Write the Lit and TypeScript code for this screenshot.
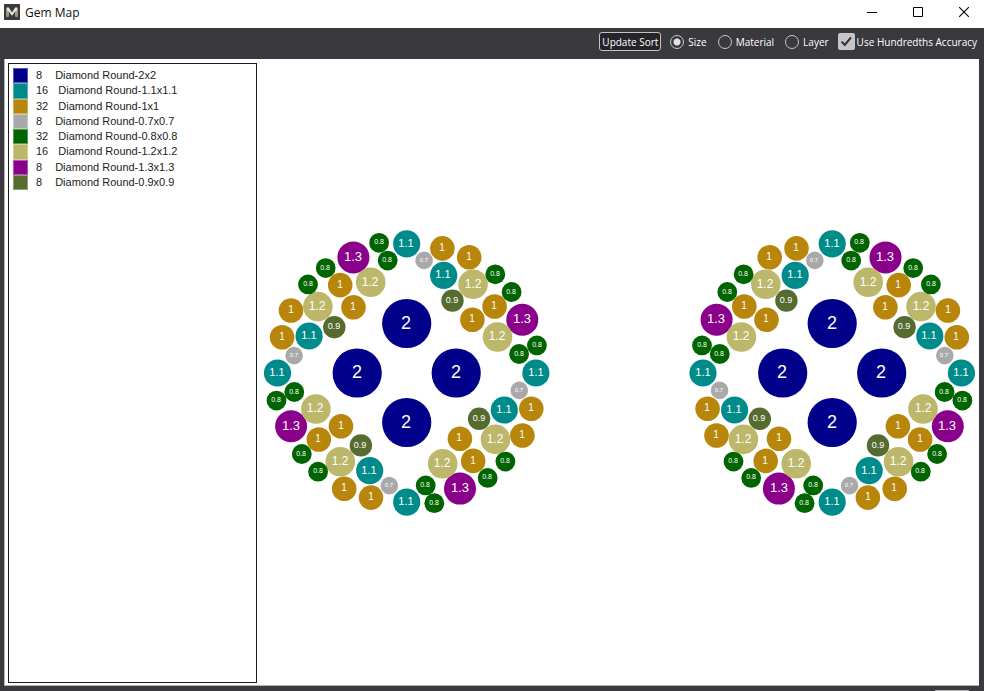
import { LitElement, html, svg, css } from "lit";
import { customElement, state } from "lit/decorators.js";

type Size = "2" | "1.3" | "1.2" | "1.1" | "1" | "0.9" | "0.8" | "0.7";

interface Style {
  color: string;
  r: number;
  font: number;
}

const STYLES: Record<Size, Style> = {
  "2": { color: "#00008b", r: 24.6, font: 18 },
  "1.3": { color: "#8b008b", r: 16, font: 13 },
  "1.2": { color: "#bdb76b", r: 14.8, font: 12 },
  "1.1": { color: "#008b8b", r: 13.6, font: 11 },
  "1": { color: "#b8860b", r: 12.3, font: 10 },
  "0.9": { color: "#556b2f", r: 11.2, font: 9 },
  "0.8": { color: "#006400", r: 9.9, font: 7 },
  "0.7": { color: "#a9a9a9", r: 8.8, font: 6 },
};

const LEGEND: { size: Size; count: number; name: string }[] = [
  { size: "2", count: 8, name: "Diamond Round-2x2" },
  { size: "1.1", count: 16, name: "Diamond Round-1.1x1.1" },
  { size: "1", count: 32, name: "Diamond Round-1x1" },
  { size: "0.7", count: 8, name: "Diamond Round-0.7x0.7" },
  { size: "0.8", count: 32, name: "Diamond Round-0.8x0.8" },
  { size: "1.2", count: 16, name: "Diamond Round-1.2x1.2" },
  { size: "1.3", count: 8, name: "Diamond Round-1.3x1.3" },
  { size: "0.9", count: 8, name: "Diamond Round-0.9x0.9" },
];

// One quarter of a setting, relative to its centre. The other three quarters
// are this one turned by 90 degrees.
const QUARTER: [Size, number, number][] = [
  ["2", 0, -49.5],
  ["1.1", 0, -129.2],
  ["0.7", 17.4, -112.6],
  ["1", 35.7, -124.6],
  ["1", 62.5, -115.7],
  ["1.1", 37, -97.6],
  ["1.2", 66.4, -88.8],
  ["0.8", 88.6, -98.7],
  ["0.9", 45.8, -72.4],
  ["0.8", 104.9, -81],
  ["1", 87.9, -66.5],
  ["1", 65.7, -53.2],
  ["1.3", 115.6, -53.3],
  ["1.2", 90.8, -36],
  ["0.8", 130.2, -27.6],
  ["0.8", 112.4, -19],
];

@customElement("gem-legend")
class GemLegend extends LitElement {
  static styles = css`
    :host {
      display: block;
      box-sizing: border-box;
      border: 1px solid #1b1b1b;
      padding: 4px;
    }
    .list {
      display: grid;
      grid-auto-rows: 1fr;
      height: 122px;
      margin: 0;
      padding: 0;
      list-style: none;
    }
    .row {
      display: flex;
      align-items: center;
      font: 11px/15px "Liberation Sans", Arial, sans-serif;
      color: #1c1c1c;
      white-space: pre;
    }
    .swatch {
      box-sizing: border-box;
      width: 15px;
      height: 100%;
      margin-right: 8px;
      border: 1px solid rgba(255, 255, 255, 0.35);
    }
    .name {
      margin-left: 10px;
    }
    .single .name {
      margin-left: 13px;
    }
  `;

  render() {
    return html`<ul class="list">
      ${LEGEND.map(
        (g) => html`<li class="row ${g.count < 10 ? "single" : ""}"
          ><span class="swatch" style="background-color:${STYLES[g.size].color}"></span
          ><span class="count">${g.count}</span
          ><span class="name">${g.name}</span
        ></li>`
      )}
    </ul>`;
  }
}

@customElement("gem-canvas")
class GemCanvas extends LitElement {
  static styles = css`
    :host {
      display: block;
    }
    .map {
      display: block;
      width: 100%;
      height: 100%;
    }
    .label {
      font-family: "Liberation Sans", Arial, sans-serif;
      fill: #fff;
      text-anchor: middle;
    }
  `;

  private gem(size: Size, x: number, y: number) {
    const s = STYLES[size];
    return svg`<circle cx=${x} cy=${y} r=${s.r} fill=${s.color}></circle>
      <text class="label" x=${Math.round(x - 0.4)} y=${Math.round(
        y - 1 + s.font * 0.36
      )} font-size=${s.font}>${size}</text>`;
  }

  private setting(cx: number, cy: number, mirror: number) {
    return QUARTER.flatMap(([size, x, y]) =>
      [
        [x, y],
        [-y, x],
        [-x, -y],
        [y, -x],
      ].map(([px, py]) => this.gem(size, cx + mirror * px, cy + py))
    );
  }

  render() {
    return html`<svg
      class="map"
      viewBox="0 0 722 626"
      role="img"
      aria-label="Gem map"
    >
      ${this.setting(149.7, 314, 1)} ${this.setting(575.2, 314, -1)}
    </svg>`;
  }
}

@customElement("app-root")
class AppRoot extends LitElement {
  @state() private sort = "Size";
  @state() private hundredths = true;

  static styles = css`
    :host {
      display: flex;
      flex-direction: column;
      box-sizing: border-box;
      height: 100vh;
      background: #3a393d;
      font-family: "Open Sans", "Noto Sans", sans-serif;
    }
    .titlebar {
      display: flex;
      align-items: center;
      height: 28px;
      padding: 0 0 4px 4px;
      box-sizing: border-box;
      background: #fff;
    }
    .logo {
      width: 16px;
      height: 16px;
      margin-right: 5px;
    }
    .title {
      flex: 1;
      margin: 0;
      padding-top: 2px;
      font-size: 12px;
      font-weight: 400;
      line-height: 16px;
      color: #111;
    }
    .controls {
      display: flex;
      gap: 6px;
    }
    .control {
      display: flex;
      justify-content: center;
      align-items: center;
      width: 40px;
      height: 24px;
      padding: 0;
      border: 0;
      background: none;
    }
    .toolbar {
      display: flex;
      align-items: center;
      justify-content: flex-end;
      height: 31px;
      padding: 0 7px 4px 0;
      box-sizing: border-box;
      font-size: 10px;
      line-height: 14px;
      color: #fff;
    }
    .update {
      height: 19px;
      padding: 0 2px;
      border: 1px solid #c4c4c4;
      border-radius: 3px;
      background: #252429;
      color: #fff;
      font: inherit;
    }
    .option {
      display: flex;
      align-items: center;
      gap: 4px;
      margin-left: 9px;
    }
    .option.wide {
      margin-left: 11px;
    }
    .radio {
      appearance: none;
      box-sizing: border-box;
      width: 14px;
      height: 14px;
      margin: 0;
      border: 1px solid #c8c8c8;
      border-radius: 50%;
    }
    .radio:checked {
      background: radial-gradient(circle, #e4e4e4 3px, transparent 4px);
    }
    .tick {
      display: grid;
    }
    .check {
      grid-area: 1 / 1;
      appearance: none;
      width: 17px;
      height: 17px;
      margin: 0;
      border-radius: 2px;
      background: #c6c6c6;
    }
    .mark {
      grid-area: 1 / 1;
      width: 17px;
      height: 17px;
      pointer-events: none;
    }
    .option.boxed {
      gap: 2px;
    }
    .page {
      flex: 1;
      display: flex;
      min-height: 0;
      margin: 0 5px 0 4px;
      padding: 4px 0 2px 3px;
      box-sizing: border-box;
      border-left: 1px solid #b5b5b5;
      border-bottom: 1px solid #b5b5b5;
      background: #fff;
    }
    .legend {
      flex: 0 0 249px;
    }
    .canvas {
      flex: 1;
      min-width: 0;
      margin: -4px 0 -2px;
    }
    .footer {
      display: flex;
      align-items: flex-end;
      justify-content: flex-end;
      height: 5px;
      padding-right: 15px;
    }
    .grip {
      width: 34px;
      height: 1px;
      background: #b0b0b0;
    }
  `;

  private option(name: string, wide: boolean) {
    return html`<label class="option ${wide ? "wide" : ""}"
      ><input
        class="radio"
        type="radio"
        name="sort"
        .checked=${this.sort === name}
        @change=${() => (this.sort = name)}
      />${name}</label
    >`;
  }

  render() {
    return html`
      <header class="titlebar">
        <svg class="logo" viewBox="0 0 16 16" aria-hidden="true">
          <rect width="16" height="16" fill="#3c3a38" />
          <path d="M2.5 12.5V3.5H4.8L8 8.4L11.2 3.5H13.5V12.5H11.4V7L8.6 11.2H7.4L4.6 7V12.5Z" fill="#e4e4e2" />
          <path d="M2.5 12.5V6L4.6 8V12.5ZM11.4 12.5V8L13.5 6V12.5Z" fill="#a3977c" />
        </svg>
        <h1 class="title">Gem Map</h1>
        <div class="controls">
          <button class="control" aria-label="Minimize">
            <svg width="10" height="11" viewBox="0 0 10 11"><path d="M0 5.5H10" stroke="#000" /></svg>
          </button>
          <button class="control" aria-label="Maximize">
            <svg width="10" height="10" viewBox="0 0 10 10"><path d="M.5.5H9.5V9.5H.5Z" fill="none" stroke="#000" /></svg>
          </button>
          <button class="control" aria-label="Close">
            <svg width="10" height="10" viewBox="0 0 10 10"><path d="M0 0L10 10M10 0L0 10" stroke="#000" stroke-width="1.1" /></svg>
          </button>
        </div>
      </header>
      <div class="toolbar">
        <button class="update">Update Sort</button>
        ${this.option("Size", false)} ${this.option("Material", true)}
        ${this.option("Layer", true)}
        <label class="option boxed"
          ><span class="tick"
            ><input
              class="check"
              type="checkbox"
              .checked=${this.hundredths}
              @change=${(e: Event) =>
                (this.hundredths = (e.target as HTMLInputElement).checked)}
            />${this.hundredths
              ? html`<svg class="mark" viewBox="0 0 17 17"><path d="M3.6 8.6L6.8 12L13 4.4" fill="none" stroke="#303034" stroke-width="2" /></svg>`
              : ""}</span
          >Use Hundredths Accuracy</label
        >
      </div>
      <main class="page">
        <gem-legend class="legend"></gem-legend>
        <gem-canvas class="canvas"></gem-canvas>
      </main>
      <footer class="footer"><span class="grip"></span></footer>
    `;
  }
}
